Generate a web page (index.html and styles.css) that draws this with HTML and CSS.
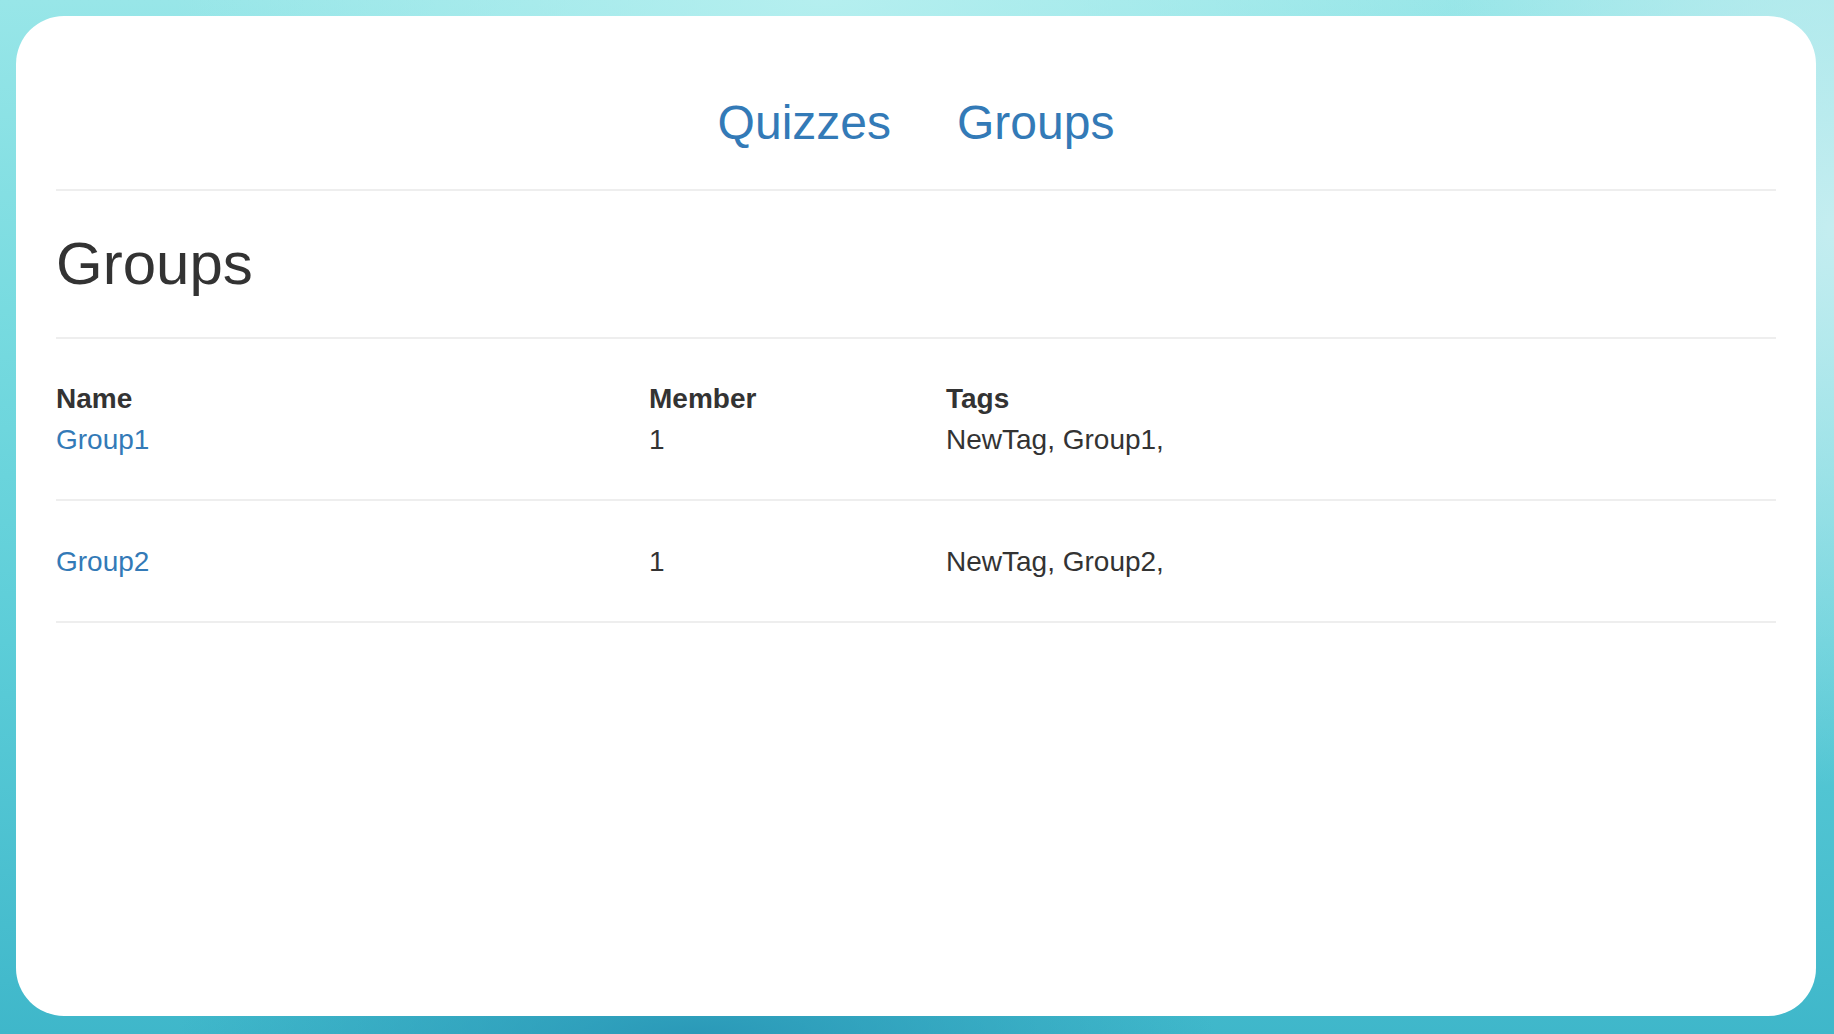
FILE: index.html
```html
<!DOCTYPE html>
<html lang="en">
<head>
<meta charset="utf-8">
<title>Groups</title>
<link rel="stylesheet" href="styles.css">
</head>
<body>
<div class="card">
  <nav class="nav">
    <a class="nav-link" href="#">Quizzes</a>
    <a class="nav-link" href="#">Groups</a>
  </nav>
  <hr class="sep">
  <h1 class="title">Groups</h1>
  <hr class="sep">
  <div class="row">
    <div class="cell head">Name</div>
    <div class="cell head">Member</div>
    <div class="cell head">Tags</div>
    <div class="cell"><a class="link" href="#">Group1</a></div>
    <div class="cell">1</div>
    <div class="cell">NewTag, Group1,</div>
  </div>
  <hr class="sep">
  <div class="row row-plain">
    <div class="cell"><a class="link" href="#">Group2</a></div>
    <div class="cell">1</div>
    <div class="cell">NewTag, Group2,</div>
  </div>
  <hr class="sep">
</div>
</body>
</html>
```
FILE: styles.css
```css
html, body {
  margin: 0;
  padding: 0;
}

body {
  width: 1834px;
  height: 1034px;
  box-sizing: border-box;
  padding: 16px 18px 18px 16px;
  font-family: "Liberation Sans", Arial, sans-serif;
  color: #333;
  background:
    radial-gradient(ellipse 520px 110px at 38% 100%, rgba(40, 150, 182, 0.9), rgba(40, 150, 182, 0) 100%),
    radial-gradient(ellipse 420px 560px at 100% 22%, rgba(200, 238, 241, 0.95), rgba(200, 238, 241, 0) 100%),
    radial-gradient(ellipse 650px 220px at 45% 0%, rgba(184, 240, 240, 0.9), rgba(184, 240, 240, 0) 100%),
    linear-gradient(180deg, #98e6e8 0%, #78dbe0 30%, #5ccdd8 62%, #3fb7ca 100%);
  overflow: hidden;
}

.card {
  width: 1800px;
  height: 1000px;
  box-sizing: border-box;
  background: #fff;
  border-radius: 48px;
  padding: 79px 40px 0 40px;
}

.nav {
  display: flex;
  justify-content: center;
  gap: 66px;
  height: 56px;
  margin-bottom: 38px;
}

.nav-link {
  font-size: 48px;
  line-height: 56px;
  color: #337ab7;
  text-decoration: none;
}

.sep {
  border: 0;
  height: 2px;
  margin: 0;
  background: #eeeeee;
}

.title {
  margin: 38px 0 38px 0;
  font-size: 60px;
  line-height: 70px;
  font-weight: normal;
  color: #333;
}

.row {
  display: grid;
  grid-template-columns: 593px 297px 1fr;
  grid-template-rows: 41px 40px;
  padding: 40px 0 39px 0;
  font-size: 28px;
  line-height: 40px;
}

.row-plain {
  grid-template-rows: 40px;
  padding: 41px 0 39px 0;
}

.cell {
  white-space: nowrap;
}

.head {
  font-weight: bold;
}

.link {
  color: #337ab7;
  text-decoration: none;
}
```
